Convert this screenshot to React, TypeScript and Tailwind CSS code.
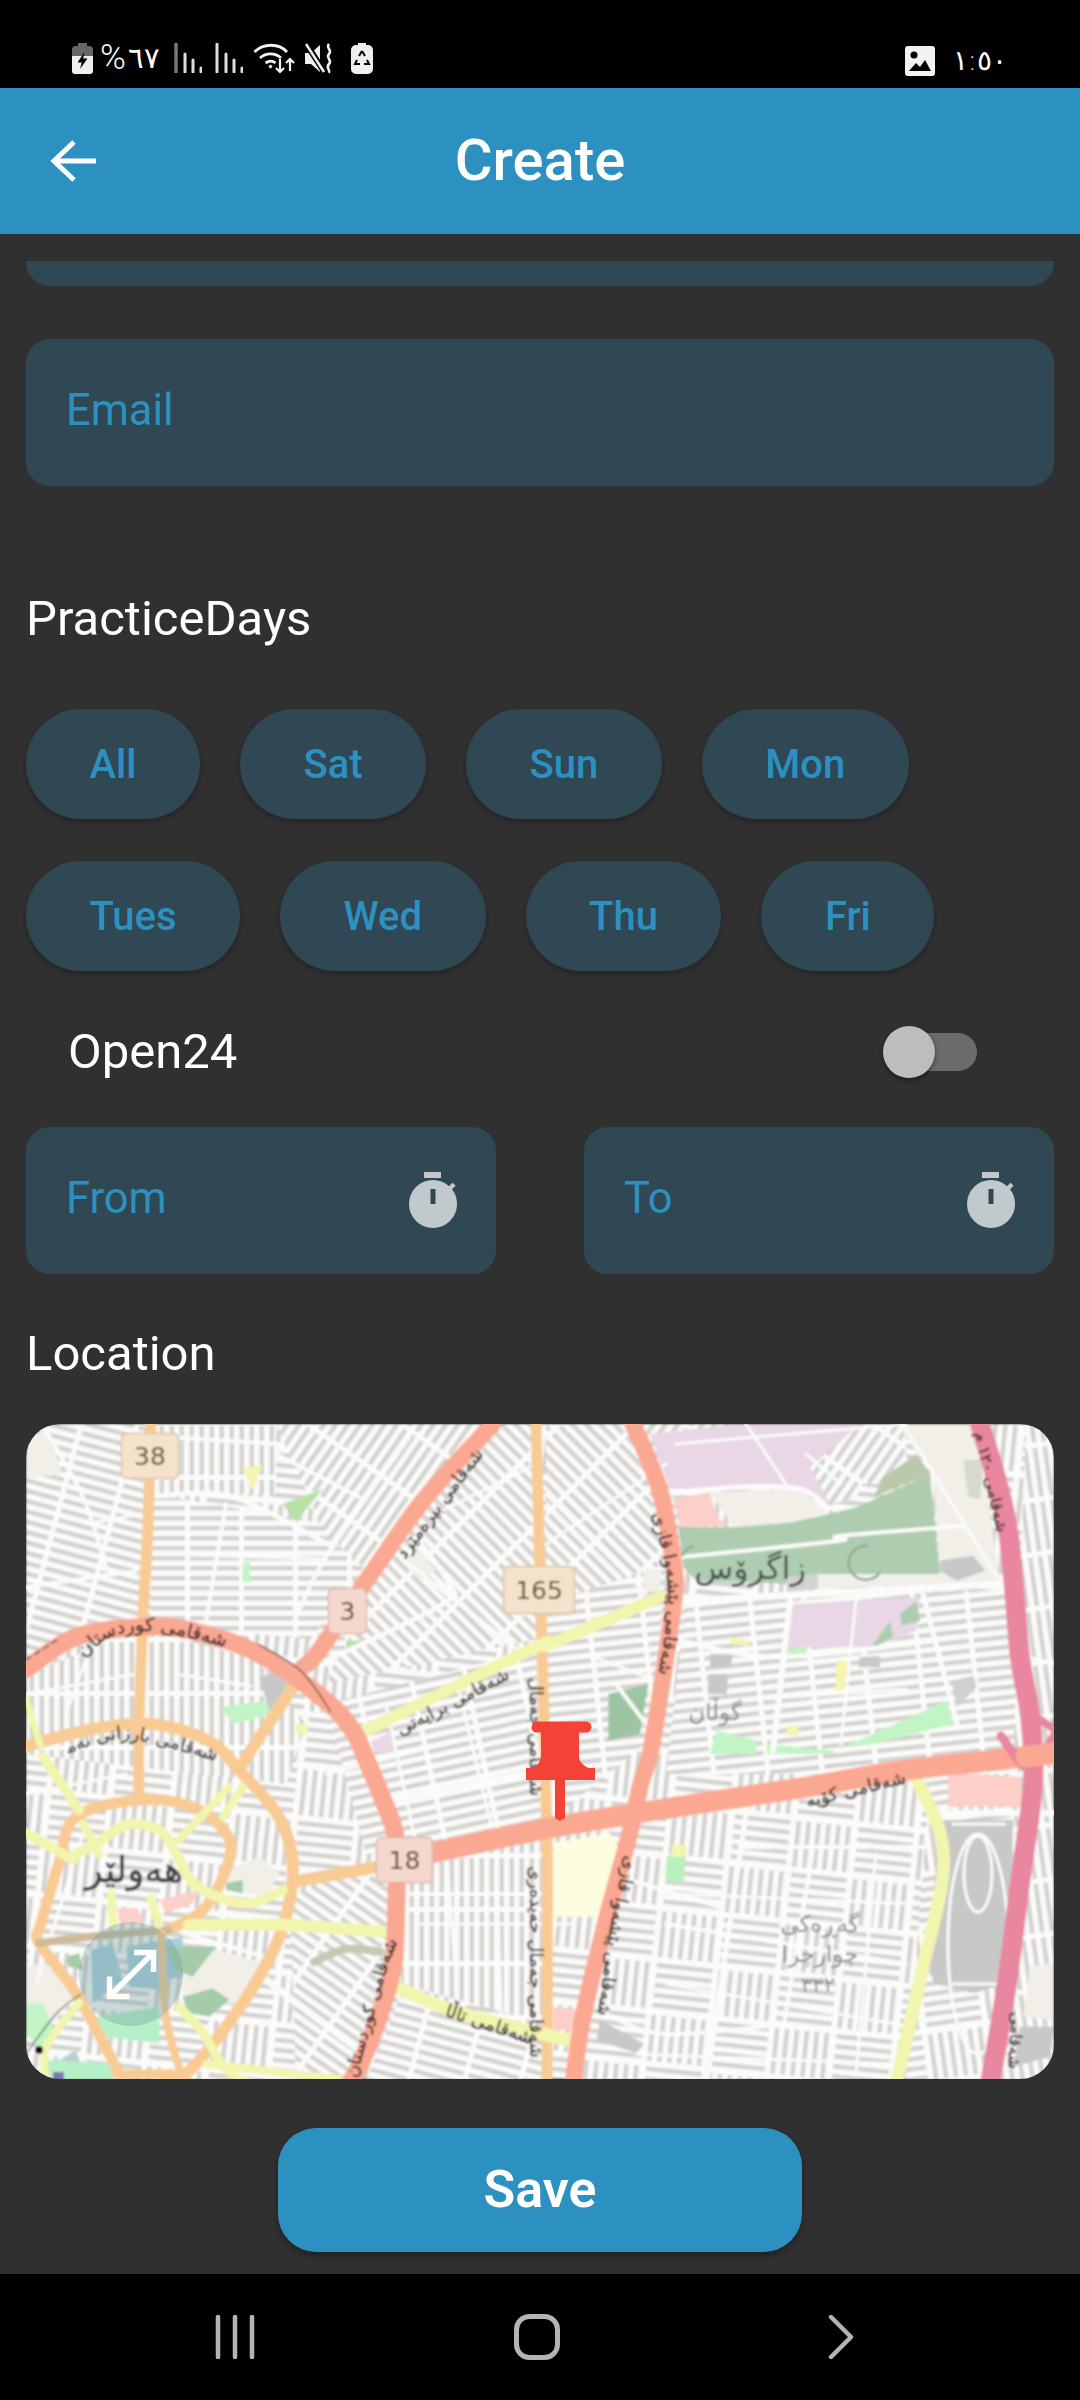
import React from "react";

type Q = "tl" | "tr" | "bl" | "br";
const OFF: Record<Q, [number, number]> = { tl: [0, 0], tr: [514, 0], bl: [0, 326], br: [514, 326] };
const pts = (q: Q, a: number[]) => {
  const out: [number, number][] = [];
  for (let i = 0; i < a.length; i += 2) out.push([OFF[q][0] + a[i] / 3, OFF[q][1] + a[i + 1] / 3]);
  return out;
};
const poly = (q: Q, a: number[]) => pts(q, a).map((p) => p.join(",")).join(" ");
const smooth = (p: [number, number][]) => {
  let d = `M${p[0][0]},${p[0][1]}`;
  for (let i = 0; i < p.length - 1; i++) {
    const a = p[Math.max(0, i - 1)], b = p[i], c = p[i + 1], e = p[Math.min(p.length - 1, i + 2)];
    d += `C${b[0] + (c[0] - a[0]) / 6},${b[1] + (c[1] - a[1]) / 6} ${c[0] - (e[0] - b[0]) / 6},${c[1] - (e[1] - b[1]) / 6} ${c[0]},${c[1]}`;
  }
  return d;
};

const PATTERNS: [string, number, "s" | "m"][] = [
  ["p0", 0, "s"], ["p90", 90, "s"], ["p15", 15, "s"], ["p25", -55, "s"], ["p45", 45, "s"], ["pn45", -45, "s"],
  ["pn15", -12, "s"], ["p35", 35, "s"], ["p6", -6, "s"], ["p80", 82, "s"], ["m0", 6, "m"], ["m1", -8, "m"],
];

const REGIONS: [string, string][] = [
  ["p15", "0,0 125,0 125,195 0,240"],
  ["p90", "125,0 250,0 250,70 125,70"],
  ["p0", "125,70 300,100 340,140 285,215 125,200"],
  ["p25", "250,0 460,0 345,150 300,110"],
  ["p45", "460,0 510,0 510,215 300,260 345,150"],
  ["p90", "0,250 117,205 230,235 280,300 250,390 0,330"],
  ["pn15", "300,280 510,225 515,400 340,430"],
  ["p35", "270,470 370,430 370,560 330,656 180,656 250,540"],
  ["p90", "375,430 520,410 520,600 375,560"],
  ["p15", "375,570 520,610 520,656 340,656"],
  ["p45", "520,0 607,0 640,140 520,180"],
  ["p6", "520,180 640,140 625,315 520,400"],
  ["p25", "610,0 880,0 880,60 640,60"],
  ["p6", "660,175 1000,165 1000,350 640,350"],
  ["m0", "625,350 890,350 870,656 545,656"],
  ["m1", "905,350 990,350 970,656 880,656"],
  ["p80", "1000,0 1028,0 1028,656 975,656"],
  ["m0", "0,330 260,360 270,656 0,656"],
];

const FILLS: [string, string][] = [
  ["#f2efe9", poly("tl", [0, 60, 60, 10, 110, 150, 0, 165])],
  ["#f2efe9", poly("tr", [1090, 0, 1310, 0, 1380, 470, 835, 495, 835, 450, 1200, 440, 1180, 150, 1090, 30])],
  ["#e9d7e6", poly("tr", [330, 30, 600, 0, 1080, 0, 1000, 100, 950, 220, 860, 250, 780, 195, 600, 185, 390, 195])],
  ["url(#p25)", poly("tr", [810, 130, 960, 0, 1080, 0, 1000, 100, 950, 220, 870, 240])],
  ["#e9d7e6", poly("tr", [760, 540, 1140, 520, 1130, 620, 1000, 670, 740, 670])],
  ["#f2efe9", poly("tr", [510, 205, 780, 195, 860, 265, 760, 295, 580, 310])],
  ["#fccfc9", poly("tr", [400, 225, 510, 205, 530, 280, 570, 305, 420, 310])],
  ["#aecdb0", poly("tr", [415, 310, 580, 310, 760, 295, 950, 250, 1170, 150, 1185, 300, 1200, 450, 830, 450, 760, 480, 470, 470, 430, 430])],
  ["#d4d4d0", poly("tr", [740, 460, 835, 450, 835, 495, 740, 505])],
  ["#b9c9a9", poly("tr", [1030, 160, 1130, 90, 1170, 150, 1000, 220])],
  ["#d5dacb", poly("tr", [1270, 110, 1330, 105, 1320, 225, 1285, 220])],
  ["#c8c8c8", poly("tr", [1200, 410, 1300, 395, 1335, 440, 1250, 470, 1200, 440])],
  ["#c2f5c5", poly("tr", [530, 920, 650, 950, 650, 990, 510, 990])],
  ["#c2f5c5", poly("tr", [680, 960, 880, 980, 880, 990, 680, 990])],
  ["#c2f5c5", poly("tr", [910, 970, 1220, 830, 1240, 900, 1000, 960])],
  ["#c2f5c5", poly("tr", [735, 680, 800, 665, 800, 690, 735, 695])],
  ["#aecdb0", poly("tr", [1000, 660, 1050, 590, 1060, 640, 1000, 670])],
  ["#aecdb0", poly("tr", [1080, 570, 1130, 530, 1140, 590, 1085, 605])],
  ["#9ec5a3", poly("tr", [205, 810, 325, 780, 300, 930, 205, 950])],
  ["#f5f5b0", poly("tr", [890, 710, 925, 710, 910, 800, 885, 800])],
  ["#f5f5b0", poly("tr", [570, 640, 630, 650, 625, 665, 570, 660])],
  ["#f5f5b0", poly("tr", [740, 905, 775, 905, 775, 935, 740, 935])],
  ["#c8c8c8", poly("tr", [510, 690, 580, 690, 570, 730, 510, 730])],
  ["#c8c8c8", poly("tr", [505, 750, 565, 750, 560, 810, 505, 810])],
  ["#c8c8c8", poly("tr", [960, 700, 1020, 695, 1020, 730, 955, 730])],
  ["#d0d0d0", poly("tr", [1235, 770, 1300, 755, 1310, 790, 1250, 850])],
  ["#f2efe9", poly("tr", [310, 440, 365, 435, 360, 500, 310, 500])],
  ["#c2f5c5", poly("tl", [585, 850, 720, 830, 740, 870, 620, 900])],
  ["#c8c8c8", poly("tl", [700, 760, 760, 740, 790, 790, 730, 860])],
  ["#c2f5c5", poly("tl", [650, 415, 672, 415, 672, 475, 650, 475])],
  ["#f5f5b0", poly("tl", [650, 130, 710, 125, 680, 200])],
  ["#b9e0a8", poly("tl", [770, 240, 890, 195, 810, 295])],
  ["#f5f5b0", poly("tl", [810, 900, 845, 900, 845, 930, 810, 930])],
  ["#b9e0a8", poly("tl", [960, 650, 1010, 650, 960, 690])],
  ["#e9d7e6", poly("tl", [1040, 950, 1100, 920, 1110, 985, 1040, 985])],
  ["#f2efe9", poly("tl", [1130, 400, 1180, 380, 1230, 440, 1180, 470])],
  ["#fdfde0", poly("br", [40, 280, 210, 250, 235, 290, 190, 500, 40, 500])],
  ["#b9f0bd", poly("br", [380, 320, 440, 290, 430, 400, 375, 390])],
  ["#f5f5b0", poly("br", [395, 285, 440, 285, 435, 320, 395, 320])],
  ["#fccfc9", poly("br", [1225, 70, 1440, 80, 1450, 170, 1225, 170])],
  ["#c8c8c8", poly("br", [1195, 210, 1420, 210, 1400, 700, 1300, 730, 1180, 700, 1170, 640])],
  ["#c8c8c8", poly("br", [180, 810, 310, 880, 290, 910, 170, 870])],
  ["#fccfc9", poly("br", [40, 770, 125, 780, 115, 840, 40, 840])],
  ["#f5f5b0", poly("br", [40, 850, 120, 850, 115, 890, 40, 880])],
  ["#f2efe9", poly("br", [1470, 650, 1542, 640, 1542, 810, 1450, 800])],
  ["#c8c8c8", poly("br", [1440, 830, 1542, 830, 1530, 920, 1420, 950])],
  ["#f2efe9", poly("bl", [0, 650, 60, 640, 150, 740, 70, 830, 0, 800])],
  ["#c2f5c5", poly("bl", [0, 760, 50, 760, 90, 850, 60, 920, 0, 850])],
  ["#f2efe9", poly("bl", [470, 620, 570, 600, 720, 640, 640, 760, 470, 760])],
  ["#f2efe9", poly("bl", [610, 360, 700, 320, 760, 370, 720, 440, 600, 420])],
  ["#a9cfe0", poly("bl", [195, 600, 260, 580, 290, 690, 200, 760])],
  ["#a9cfe0", poly("bl", [300, 590, 410, 570, 400, 720, 310, 710])],
  ["#a9cfe0", poly("bl", [410, 570, 470, 560, 470, 680, 410, 690])],
  ["#b6f0c8", poly("bl", [200, 800, 400, 770, 400, 880, 240, 860])],
  ["#a6cba8", poly("bl", [420, 590, 570, 590, 500, 680, 450, 660])],
  ["#a6cba8", poly("bl", [470, 740, 560, 715, 610, 750, 550, 800, 490, 790])],
  ["#a6cba8", poly("bl", [120, 620, 160, 610, 170, 660, 130, 650])],
  ["#fccfc9", poly("bl", [275, 475, 335, 475, 355, 520, 280, 520])],
  ["#b9cfd0", poly("bl", [100, 930, 150, 900, 170, 960, 120, 990])],
  ["#b6f0c8", poly("bl", [60, 930, 270, 940, 260, 990, 60, 990])],
  ["#fccfc9", poly("bl", [400, 450, 520, 420, 500, 460, 420, 490])],
  ["#a6cba8", poly("bl", [600, 400, 650, 390, 650, 430, 600, 420])],
];

const STREETS: [number, number[][]][] = [
  [4, [[0, 163], [110, 147]]],
  [5, [[130, 72], [207, 73], [307, 123]]],
  [4, [[383, 13], [300, 133], [273, 187]]],
  [4, [[200, 80], [180, 197]]],
  [4, [[250, 30], [333, 73]]],
  [4, [[20, 7], [57, 73], [80, 143]]],
  [4, [[367, 127], [417, 167], [493, 227]]],
  [5, [[390, 113], [423, 160], [417, 180], [300, 237]]],
  [4, [[140, 13], [253, 20]]],
  [3, [[470, 60], [510, 100]]],
  [3, [[430, 50], [505, 120]]],
  [3, [[410, 90], [510, 40]]],
  [5, [[641, 70], [714, 63], [774, 65], [801, 83]]],
  [4, [[654, 133], [811, 117], [814, 112], [937, 102]]],
  [3, [[877, 0], [971, 153]]],
  [7, [[657, 177], [974, 160]]],
  [6, [[764, 177], [747, 327]]],
  [5, [[654, 217], [754, 233], [907, 217]]],
  [5, [[897, 170], [931, 300]]],
  [3, [[720, 0], [760, 60]]],
  [3, [[650, 20], [880, 0]]],
  [3, [[780, 30], [815, 60]]],
  [3, [[520, 120], [640, 40]]],
  [3, [[520, 70], [620, 170]]],
  [3, [[560, 230], [640, 260]]],
  [4, [[590, 260], [620, 300]]],
  [4, [[157, 509], [240, 533]]],
  [7, [[240, 556], [333, 626]]],
  [5, [[367, 376], [513, 346]]],
  [6, [[907, 389], [1028, 389]]],
  [4, [[714, 423], [901, 423]]],
  [5, [[721, 383], [681, 656]]],
  [4, [[787, 426], [757, 606]]],
  [4, [[604, 456], [694, 483]]],
  [4, [[580, 590], [640, 610], [760, 600]]],
  [4, [[640, 500], [880, 540]]],
  [4, [[370, 470], [520, 470]]],
  [3, [[0, 270], [110, 250]]],
  [3, [[0, 370], [100, 350]]],
  [3, [[520, 500], [545, 500]]],
  [3, [[990, 230], [1028, 240]]],
  [3, [[130, 130], [300, 135]]],
  [3, [[60, 100], [115, 90]]],
  [3, [[150, 250], [225, 262]]],
  [3, [[40, 290], [60, 235]]],
  [3, [[390, 500], [515, 500]]],
  [3, [[420, 420], [430, 560]]],
  [3, [[470, 410], [475, 590]]],
  [3, [[300, 350], [500, 300]]],
  [3, [[360, 280], [390, 420]]],
  [3, [[430, 255], [465, 400]]],
  [3, [[660, 280], [880, 265]]],
  [3, [[830, 175], [815, 320]]],
  [3, [[650, 470], [890, 480]]],
  [3, [[640, 560], [870, 600]]],
  [3, [[850, 430], [830, 650]]],
  [3, [[610, 630], [870, 640]]],
  [3, [[10, 560], [60, 400]]],
];

const OR = "#f9cb94";
const YE = "#f2f5ae";
const ROADS: [string, number, number[][]][] = [
  [OR, 11, [[125, 0], [122, 100], [117, 193], [113, 300], [113, 376]]],
  [OR, 11, [[510, 0], [515, 190], [521, 422], [521, 656]]],
  [OR, 12, [[277, 243], [267, 263], [227, 323], [213, 346]]],
  [OR, 12, [[267, 458], [350, 443]]],
  [OR, 12, [[0, 322], [67, 305], [127, 300], [183, 317], [213, 346], [253, 393], [267, 443], [257, 503], [233, 553], [200, 603], [160, 650], [130, 662]]],
  [OR, 11, [[13, 506], [33, 439], [50, 393], [113, 376], [167, 383], [200, 409], [203, 436], [180, 483], [143, 506]]],
  [OR, 11, [[13, 506], [13, 519], [50, 569], [90, 643], [100, 660]]],
  ["#cdbb9c", 8, [[13, 519], [70, 512], [143, 506]]],
  [OR, 8, [[135, 510], [140, 593], [155, 650]]],
  [OR, 9, [[90, 650], [160, 650]]],
  [YE, 10, [[0, 409], [47, 436]]],
  [YE, 10, [[17, 333], [53, 386]]],
  [YE, 9, [[57, 400], [73, 430]]],
  [YE, 10, [[50, 430], [70, 420], [100, 401], [133, 406], [150, 429], [167, 459], [200, 476], [227, 479], [257, 466]]],
  [YE, 8, [[203, 363], [153, 416]]],
  [YE, 8, [[217, 363], [197, 393]]],
  [YE, 12, [[163, 501], [260, 501], [360, 508]]],
  [YE, 9, [[85, 470], [87, 500]]],
  [YE, 9, [[125, 475], [133, 500]]],
  [YE, 13, [[370, 563], [433, 589], [513, 609], [554, 619]]],
  [YE, 9, [[153, 583], [177, 609], [200, 646], [225, 660]]],
  [YE, 8, [[53, 579], [20, 623], [20, 656]]],
  [YE, 8, [[180, 640], [320, 656]]],
  [YE, 7, [[0, 275], [14, 320]]],
  [YE, 12, [[634, 173], [524, 220], [510, 223], [333, 310]]],
  [YE, 13, [[891, 356], [914, 409], [916, 459], [897, 543], [871, 656]]],
  ["#fba892", 18, [[0, 245], [50, 213], [117, 203], [167, 207], [233, 230], [300, 277], [327, 307], [340, 335], [357, 376], [370, 416], [370, 493], [367, 543], [353, 593], [333, 643], [323, 660]]],
  ["#fba892", 17, [[467, 0], [400, 73], [347, 147], [293, 227], [277, 243]]],
  ["#fba892", 21, [[405, 429], [513, 406], [631, 386], [781, 363], [881, 346], [997, 333], [1028, 329]]],
  ["#fba892", 17, [[607, 0], [634, 67], [649, 150], [648, 175], [640, 233], [625, 326], [615, 359], [602, 416], [581, 493], [557, 593], [547, 660]]],
  ["#e8879f", 20, [[954, 0], [981, 100], [994, 233], [1004, 290], [1007, 359], [994, 459], [981, 559], [964, 660]]],
  ["#e8879f", 9, [[975, 312], [1004, 345], [1028, 312]]],
  ["#e8879f", 8, [[1006, 290], [1028, 305]]],
  ["#fba892", 21, [[1000, 333], [1028, 329]]],
  ["#c7c8b4", 8, [[288, 538], [320, 525], [355, 528]]],
];

const LABELS: [string, string, number, number[][]][] = [
  ["l1", "شەقامی کوردستان", 19, [[55, 236], [87, 212], [133, 208], [203, 224]]],
  ["l2", "شەقامی بیرەمێرد", 18, [[381, 133], [418, 83], [456, 33]]],
  ["l3", "شەقامی برایەتی", 18, [[372, 313], [430, 283], [487, 253]]],
  ["l4", "شەقامی بارزانی نەمر", 18, [[40, 330], [100, 315], [183, 335]]],
  ["l5", "شەقامی پێشەوا قازی", 18, [[625, 85], [642, 167], [632, 255]]],
  ["l6", "شەقامی پێشەوا قازی", 18, [[601, 426], [586, 493], [571, 596]]],
  ["l7", "شەقامی ١٢٠ م", 16, [[947, 0], [973, 118]]],
  ["l8", "شەقامی", 16, [[986, 582], [982, 650]]],
  ["l9", "شەقامی کۆیە", 18, [[777, 384], [885, 358]]],
  ["l10", "شەقامی تاڵا", 18, [[413, 590], [510, 622]]],
  ["l11", "شەقامی کوردستان", 18, [[330, 656], [358, 555], [372, 516]]],
  ["l12", "شەقامی جەمال حەیدەری", 18, [[504, 436], [504, 640]]],
  ["l13", "شەقامی جەمال", 18, [[504, 235], [504, 391]]],
];

const SHIELDS: [string, number, number, number, number, string, string, string][] = [
  ["38", 95, 9, 57, 45, "#f4e2cc", "#dcc3a4", "#5b4326"],
  ["3", 302, 164, 38, 45, "#f4d8d0", "#dcb6ac", "#5b3a30"],
  ["165", 477, 142, 71, 47, "#f4e2cc", "#dcc3a4", "#5b4326"],
  ["18", 350, 413, 56, 45, "#f4d8d0", "#dcb6ac", "#5b3a30"],
];

const BAR = "#d3d2cf";

function MapDrawing() {
  return (
    <svg viewBox="0 0 1028 655" className="block h-full w-full" fontFamily="'DejaVu Sans', sans-serif">
      <defs>
        <filter id="soft" x="0" y="0" width="100%" height="100%">
          <feGaussianBlur stdDeviation="0.8" />
        </filter>
        {PATTERNS.map(([id, a, t]) =>
          t === "s" ? (
            <pattern key={id} id={id} width="54" height="20" patternUnits="userSpaceOnUse" patternTransform={`rotate(${a})`}>
              <rect width="54" height="20" fill="#fbfbfa" />
              <rect x="2" y="2" width="49" height="4.500" fill={BAR} />
              <rect x="2" y="12" width="49" height="4.500" fill={BAR} />
            </pattern>
          ) : (
            <pattern key={id} id={id} width="124" height="104" patternUnits="userSpaceOnUse" patternTransform={`rotate(${a})`}>
              <rect width="124" height="104" fill="#fbfbfa" />
              {[2, 12, 22, 32, 42].map((y) => (
                <rect key={y} x="2" y={y} width="56" height="4.500" fill={BAR} />
              ))}
              {[64, 74, 84, 94, 104, 114].map((x) => (
                <rect key={x} x={x} y="2" width="4.500" height="46" fill={BAR} />
              ))}
              {[54, 64, 74, 84, 94].map((y) => (
                <rect key={y} x="64" y={y} width="56" height="4.500" fill={BAR} />
              ))}
              {[2, 12, 22, 32, 42, 52].map((x) => (
                <rect key={x} x={x} y="54" width="4.500" height="46" fill={BAR} />
              ))}
            </pattern>
          )
        )}
        {LABELS.map(([id, , , p]) => (
          <path key={id} id={id} d={smooth(p as [number, number][])} />
        ))}
      </defs>
      <g filter="url(#soft)">
        <rect width="1028" height="655" fill="url(#m0)" />
        {REGIONS.map(([f, p], i) => (
          <polygon key={i} points={p} fill={`url(#${f})`} />
        ))}
        {FILLS.map(([c, p], i) => (
          <polygon key={i} points={p} fill={c} />
        ))}
        <g fill="none" stroke="#fbfbfa" strokeWidth="3">
          <ellipse cx="952" cy="520" rx="30" ry="110" />
          <ellipse cx="952" cy="450" rx="14" ry="38" />
          <path d="M926 400H980M926 560H980" />
        </g>
        <g fill="none" stroke="#fbfbfa" strokeLinecap="round" strokeLinejoin="round">
          {STREETS.map(([w, p], i) => (
            <path key={i} d={smooth(p as [number, number][])} strokeWidth={w} />
          ))}
        </g>
        <g fill="none" stroke="#8fae90" strokeWidth="2.500">
          <path d="M842 122a17 17 0 1 0 12 26" />
          <path d="M668 122a17 17 0 0 0-12 10" />
        </g>
        <g fill="none" strokeLinecap="round" strokeLinejoin="round">
          {ROADS.map(([c, w, p], i) => (
            <path key={i} d={smooth(p as [number, number][])} stroke={c} strokeWidth={w} />
          ))}
        </g>
        <path d={smooth([[0, 236], [34, 214]])} fill="none" stroke="#5d4a45" strokeWidth="1.300" strokeDasharray="7 3" />
        <path d={smooth([[232, 220], [275, 247], [305, 288]])} fill="none" stroke="#5d4a45" strokeWidth="1.300" />
        <path d={smooth([[0, 630], [30, 590], [55, 570]])} fill="none" stroke="#6a6a5a" strokeWidth="1.300" />
        <g fill="#2c211d" stroke="#2c211d" strokeWidth="0.300">
          {LABELS.map(([id, t, s]) => (
            <text key={id} fontSize={s} textAnchor="middle">
              <textPath href={`#${id}`} startOffset="50%">{t}</textPath>
            </text>
          ))}
        </g>
        <g textAnchor="middle">
          <text x="724" y="155" fontSize="32" fill="#4b4b4b">زاگرۆس</text>
          <text x="689" y="296" fontSize="23" fill="#8a8a8a">گوڵان</text>
          <text x="108" y="458" fontSize="36" fill="#3c3c3c" stroke="#3c3c3c" strokeWidth="0.500">هەولێر</text>
          <text x="794" y="508" fontSize="23" fill="#8a8a8a">گەڕەکی</text>
          <text x="794" y="538" fontSize="23" fill="#8a8a8a">چوارچرا</text>
          <text x="792" y="568" fontSize="21" fill="#8a8a8a">٣٣٢</text>
        </g>
        {SHIELDS.map(([t, x, y, w, h, f, s, c]) => (
          <g key={t}>
            <rect x={x + 0.5} y={y + 0.5} width={w} height={h} rx="5" fill={f} stroke={s} strokeWidth="1.500" />
            <text x={x + w / 2 + 0.5} y={y + h / 2 + 9} fontSize="25" fill={c} textAnchor="middle">{t}</text>
          </g>
        ))}
        <circle cx="13" cy="626" r="4" fill="#111" />
        <rect x="27" y="648" width="11" height="8" fill="#7a7ab0" />
      </g>
      <path
        d="M506 302a4.500 4.500 0 0 1 4.500-4.500H560a4.500 4.500 0 0 1 0 11h-7V332c0 6 5 10 10 12h6v12H539V394l-5 3-5-3V356H500V344h6c5-2 9-6 9-12V308.500h-4.500A4.500 4.500 0 0 1 506 302Z"
        fill="#f44336"
      />
      <circle cx="105" cy="550" r="52" fill="#6f9a9c" fillOpacity="0.35" />
      <g stroke="#ffffff" strokeWidth="5.500" fill="none">
        <path d="M86 570L125 531" />
        <path d="M108 528.500H127.500V548" />
        <path d="M83.500 552.500V572.500H103.500" />
      </g>
    </svg>
  );
}

function Stopwatch() {
  return (
    <svg viewBox="0 0 60 72" className="mt-[10px] h-[72px] w-[60px]" fill="#c1c9cd">
      <rect x="21" y="2" width="17" height="6" />
      <path d="M30 10a24 24 0 1 0 24 24 23.800 23.800 0 0 0-5-14.700l3.600-3.600-3-3-3.600 3.600A23.800 23.800 0 0 0 30 10Zm-2.500 9h5v15h-5Z" fillRule="evenodd" />
    </svg>
  );
}

function StatusLeft() {
  return (
    <div className="flex items-center text-white">
      <svg viewBox="0 0 21 31" className="h-[31px] w-[21px]">
        <path d="M6 0h9v3h2a4 4 0 0 1 4 4v6H0V7a4 4 0 0 1 4-4h2Z" fill="#666" />
        <path d="M0 13h21v15a3 3 0 0 1-3 3H3a3 3 0 0 1-3-3Z" fill="#efefef" />
        <path d="M12.500 9l-7 10.500h4.200L8 26l7.500-10.500h-4.300Z" fill="#000" />
      </svg>
      <span className="ml-[7px] text-[35px] font-light leading-[36px] [font-family:Roboto,sans-serif]">%</span>
      <span className="ml-[2px] text-[29px] font-light leading-[36px] [font-family:'DejaVu_Sans',sans-serif]">٦٧</span>
      <svg viewBox="0 0 28 30" className="ml-[14px] h-[30px] w-[28px]" fill="none" strokeLinecap="round">
        <path d="M2 1V29" stroke="#777" strokeWidth="3.500" />
        <path d="M11 11V29M19 17V29M27 25V29" stroke="#ddd" strokeWidth="3" />
      </svg>
      <svg viewBox="0 0 28 30" className="ml-[13px] h-[30px] w-[28px]" fill="none" strokeLinecap="round">
        <path d="M2 1V29M11 11V29M19 17V29M27 25V29" stroke="#ddd" strokeWidth="3" />
      </svg>
      <svg viewBox="0 0 42 32" className="ml-[10px] h-[32px] w-[42px]" fill="none" stroke="#f2f2f2" strokeWidth="2.800">
        <path d="M1.500 10C10 1 26 1 34 10" />
        <path d="M7 16c6-5.500 15-5.500 21 0" />
        <path d="M12.500 21c3.500-2.500 7-2.500 10 0" />
        <circle cx="17.500" cy="24.500" r="1.500" fill="#f2f2f2" strokeWidth="0.500" />
        <path d="M27 17V30M23 26l4 4 4-4M37 29V17M33 21l4-4 4 4" strokeWidth="2.200" />
      </svg>
      <svg viewBox="0 0 30 31" className="ml-[10px] h-[31px] w-[30px]">
        <path d="M0 10h6l9-8v27l-9-8H0Z" fill="#efefef" />
        <path d="M2 2L20 30" stroke="#000" strokeWidth="6" />
        <path d="M1 1L19 29" stroke="#efefef" strokeWidth="2.500" />
        <path d="M24 1c-4 4 4 6 0 10s4 6 0 10 2 6 0 9" stroke="#efefef" strokeWidth="2.500" fill="none" />
      </svg>
      <svg viewBox="0 0 22 31" className="ml-[16px] h-[31px] w-[22px]">
        <path d="M7 0h8v2h2a5 5 0 0 1 5 5v19a5 5 0 0 1-5 5H5a5 5 0 0 1-5-5V7a5 5 0 0 1 5-5h2Z" fill="#efefef" />
        <path d="M11 8l-3 5M11 8l3 5M6 17l-2 4h5M16 17l2 4h-5" stroke="#000" strokeWidth="2" fill="none" />
      </svg>
    </div>
  );
}

function StatusRight() {
  return (
    <div className="flex items-center text-white">
      <svg viewBox="0 0 30 30" className="h-[30px] w-[30px]">
        <path d="M3 0h24a3 3 0 0 1 3 3v24a3 3 0 0 1-3 3H3a3 3 0 0 1-3-3V3a3 3 0 0 1 3-3Z" fill="#f2f2f2" />
        <circle cx="9" cy="9" r="3.500" fill="#000" />
        <path d="M4 25l7-8 4 4 5-7 6 11Z" fill="#000" />
      </svg>
      <span className="ml-[18px] text-[28px] font-light leading-[30px] [font-family:'DejaVu_Sans',sans-serif]">١:٥٠</span>
    </div>
  );
}

const DAYS = ["All", "Sat", "Sun", "Mon", "Tues", "Wed", "Thu", "Fri"];

function Field({ label, icon }: { label: string; icon?: boolean }) {
  return (
    <div className="flex h-[147px] flex-1 items-center justify-between rounded-[24px] bg-[#304754] pl-[40px] pr-[33px]">
      <span className="pb-[3px] text-[43.500px] leading-[50px] text-[#2c91c0]">{label}</span>
      {icon ? <Stopwatch /> : null}
    </div>
  );
}

export default function App() {
  return (
    <div className="flex h-[2400px] w-[1080px] flex-col overflow-hidden bg-[#303030] [font-family:Roboto,sans-serif]">
      <div className="flex h-[88px] shrink-0 items-end justify-between bg-black pb-[12px] pl-[72px] pr-[73px]">
        <StatusLeft />
        <StatusRight />
      </div>
      <header className="grid h-[146px] shrink-0 grid-cols-[1fr_auto_1fr] items-center bg-[#2c91c0] pl-[50px]">
        <svg viewBox="0 0 46 42" className="h-[42px] w-[46px]" fill="none" stroke="#ffffff" strokeWidth="5">
          <path d="M24 2L4 21L24 40" />
          <path d="M4 21H46" />
        </svg>
        <h1 className="pb-[2px] pr-[50px] text-[58px] font-medium leading-[64px] text-white">Create</h1>
        <div />
      </header>
      <main className="flex min-h-0 flex-1 flex-col px-[26px]">
        <div className="mt-[27px] h-[25px] shrink-0 rounded-b-[24px] bg-[#304754]" />
        <div className="mt-[53px] flex shrink-0">
          <Field label="Email" />
        </div>
        <div className="mt-[105px] text-[49px] leading-[56px] text-white">PracticeDays</div>
        <div className="mt-[62px] flex flex-wrap gap-x-[40px] gap-y-[42px]">
          {DAYS.map((d) => (
            <div key={d} className="flex h-[110px] items-center rounded-full bg-[#304754] px-[63.500px] pt-[2px] text-[40px] font-medium text-[#2c91c0] shadow-[0_3px_5px_rgba(0,0,0,0.25)]">
              {d}
            </div>
          ))}
        </div>
        <div className="mt-[55px] flex h-[52px] items-center justify-between pl-[42px] pr-[77px]">
          <span className="text-[49px] leading-[56px] text-white">Open24</span>
          <div className="relative flex h-[52px] w-[94px] items-center justify-end">
            <div className="h-[38px] w-[70px] rounded-full bg-[#6b6b6b]" />
            <div className="absolute left-0 top-0 h-[52px] w-[52px] rounded-full bg-[#bdbdbd] shadow-[0_2px_4px_rgba(0,0,0,0.5)]" />
          </div>
        </div>
        <div className="mt-[49px] flex gap-[88px]">
          <Field label="From" icon />
          <Field label="To" icon />
        </div>
        <div className="mt-[52px] text-[49px] leading-[56px] text-white">Location</div>
        <div className="mt-[42px] h-[655px] shrink-0 overflow-hidden rounded-[34px]">
          <MapDrawing />
        </div>
        <button className="mx-auto mt-[49px] flex h-[124px] w-[524px] shrink-0 items-center justify-center rounded-[38px] bg-[#2c91c0] text-[52px] font-semibold text-white shadow-[0_3px_6px_rgba(0,0,0,0.35)]">
          Save
        </button>
      </main>
      <nav className="grid h-[126px] shrink-0 grid-cols-3 items-center bg-black">
        <svg viewBox="0 0 40 44" className="ml-[215px] h-[44px] w-[40px]" fill="none" stroke="#b4b4b4" strokeWidth="4.500" strokeLinecap="round">
          <path d="M3 2V42M20 2V42M37 2V42" />
        </svg>
        <svg viewBox="0 0 46 46" className="ml-[154px] h-[46px] w-[46px]" fill="none" stroke="#b4b4b4" strokeWidth="5">
          <rect x="2.500" y="2.500" width="41" height="41" rx="13" />
        </svg>
        <svg viewBox="0 0 26 44" className="ml-[108px] h-[44px] w-[26px]" fill="none" stroke="#b4b4b4" strokeWidth="4.500" strokeLinecap="round" strokeLinejoin="round">
          <path d="M3 2L23 22L3 42" />
        </svg>
      </nav>
    </div>
  );
}
